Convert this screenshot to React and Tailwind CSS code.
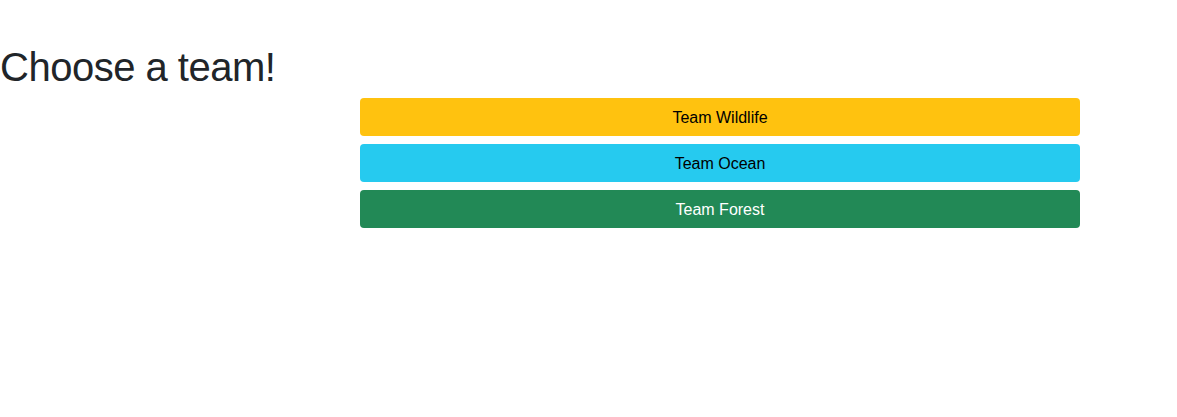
import React from 'react';

const teams = [
  { name: 'Team Wildlife', className: 'bg-[#ffc20f] text-black' },
  { name: 'Team Ocean', className: 'bg-[#26caef] text-black' },
  { name: 'Team Forest', className: 'bg-[#228956] text-white' },
];

function App() {
  return (
    <div className="min-h-[417px] bg-white pt-[43px] font-['Liberation_Sans',Arial,sans-serif]">
      <h1 className="text-[40px] leading-[48px] font-normal text-[#212529] mb-[7px] tracking-[-0.5px]">
        Choose a team!
      </h1>
      <div className="ml-[360px] w-[720px] flex flex-col gap-2">
        {teams.map((team) => (
          <button
            key={team.name}
            className={`h-[38px] w-full rounded pt-[2px] text-base ${team.className}`}
          >
            {team.name}
          </button>
        ))}
      </div>
    </div>
  );
}

export default App;
